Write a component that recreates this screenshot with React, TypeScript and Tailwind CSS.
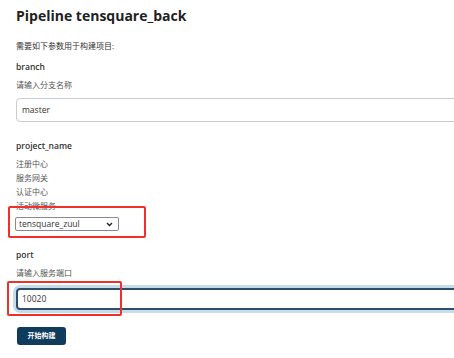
import React from "react";

const font = { fontFamily: '"Open Sans", "Noto Sans CJK SC", sans-serif' };

export default function App() {
  return (
    <div
      className="relative w-[454px] h-[358px] overflow-hidden bg-white text-[#333] pl-[16px]"
      style={font}
    >
      <h1 className="pt-[6px] text-[14px] leading-[20px] font-bold text-[#1f1f1f]">
        Pipeline tensquare_back
      </h1>

      <p className="mt-[13px] text-[8px] leading-[14px]">需要如下参数用于构建项目:</p>

      {/* branch */}
      <div className="mt-[8px] text-[8.5px] leading-[12px] font-semibold">branch</div>
      <div className="mt-[6px] text-[8px] leading-[12px] text-[#555]">请输入分支名称</div>
      <div className="mt-[7px] w-[520px] h-[24px] border border-[#c9ccd1] rounded-[4px] flex items-center pl-[5px] text-[8.5px]">
        master
      </div>

      {/* project_name */}
      <div className="mt-[18px] text-[8.5px] leading-[12px] font-semibold">project_name</div>
      <div className="mt-[5px] flex flex-col text-[8px] leading-[14px] text-[#555]">
        <span>注册中心</span>
        <span>服务网关</span>
        <span>认证中心</span>
        <span>活动微服务</span>
      </div>
      <div className="mt-[4px] -ml-[1px] w-[104px] h-[14px] border border-[#8a8a8a] rounded-[2px] flex items-center justify-between pl-[3px] pr-[5px] text-[8.5px]">
        <span>tensquare_zuul</span>
        <svg width="7" height="5" viewBox="0 0 7 5">
          <path d="M1 1 L3.5 3.5 L6 1" fill="none" stroke="#222" strokeWidth="1.4" />
        </svg>
      </div>

      {/* port */}
      <div className="mt-[18px] text-[8.5px] leading-[12px] font-semibold">port</div>
      <div className="mt-[6px] text-[8px] leading-[12px] text-[#555]">请输入服务端口</div>
      <div className="mt-[9px] w-[520px] h-[22px] border-2 border-[#2d4f6b] rounded-[4px] ring-[3px] ring-[#c8dce8] flex items-center pl-[4px] text-[8.5px]">
        10020
      </div>

      <button className="mt-[17px] ml-[1px] w-[49px] h-[18px] rounded-[3px] bg-[#0f3b5c] text-white text-[7px] font-bold flex items-center justify-center">
        开始构建
      </button>

      {/* annotation boxes */}
      <div className="absolute left-[8px] top-[206px] w-[138px] h-[32px] border-2 border-[#f0302a] rounded-[2px]" />
      <div className="absolute left-[7px] top-[281px] w-[115px] h-[35px] border-2 border-[#f0302a] rounded-[2px]" />
    </div>
  );
}
